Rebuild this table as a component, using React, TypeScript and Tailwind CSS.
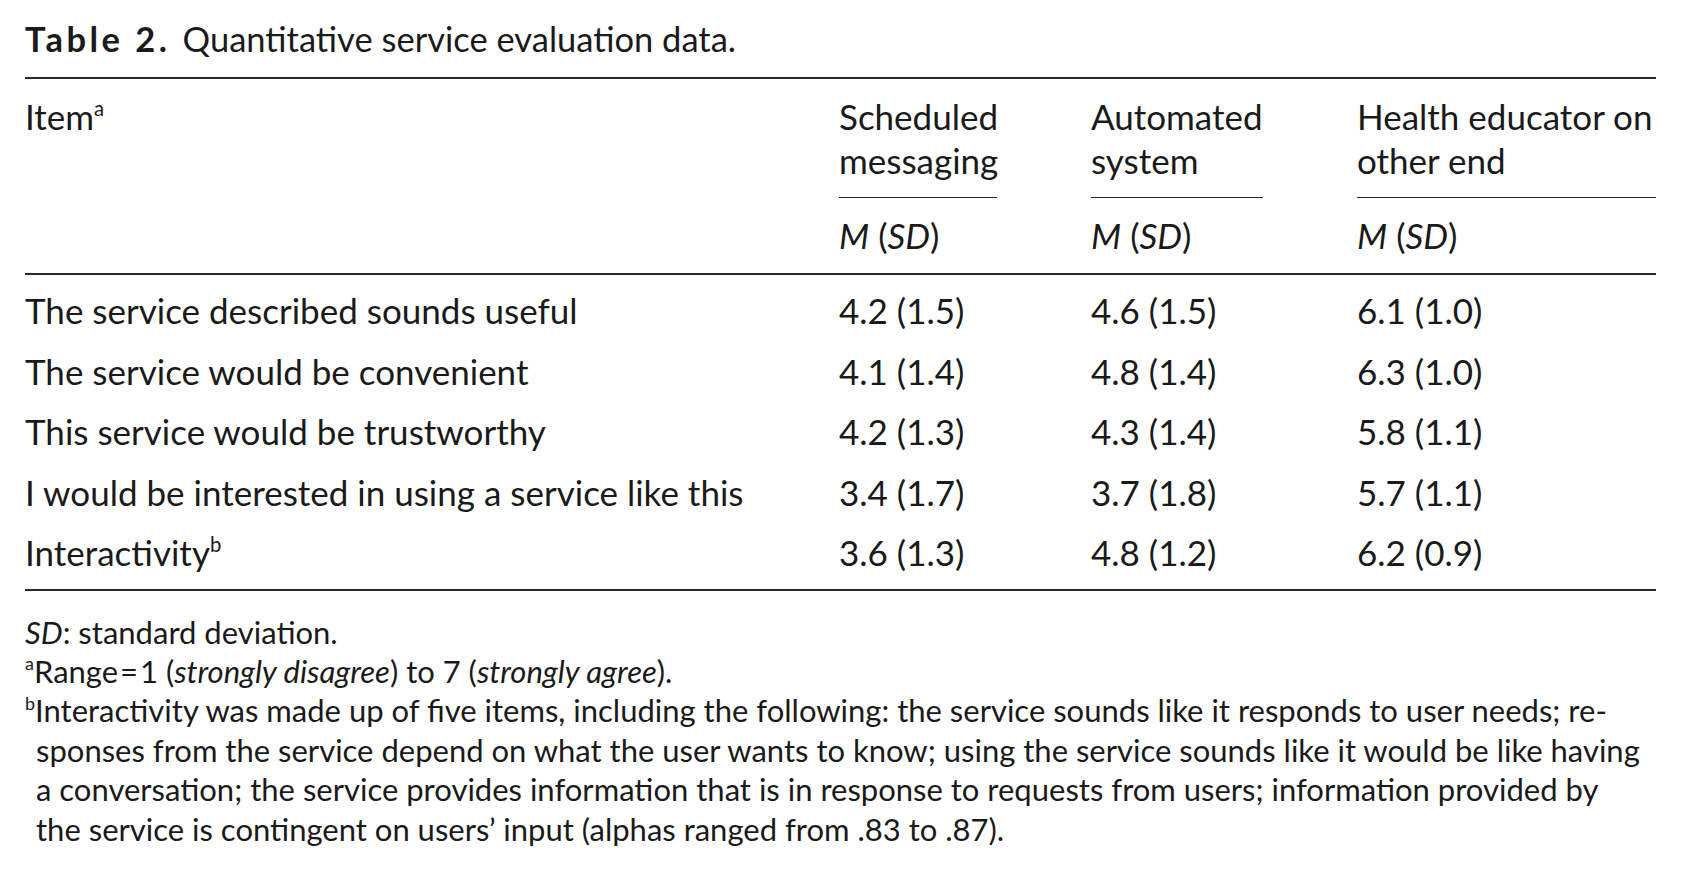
const rows = [
  { item: "The service described sounds useful", a: "4.2 (1.5)", b: "4.6 (1.5)", c: "6.1 (1.0)" },
  { item: "The service would be convenient", a: "4.1 (1.4)", b: "4.8 (1.4)", c: "6.3 (1.0)" },
  { item: "This service would be trustworthy", a: "4.2 (1.3)", b: "4.3 (1.4)", c: "5.8 (1.1)" },
  { item: "I would be interested in using a service like this", a: "3.4 (1.7)", b: "3.7 (1.8)", c: "5.7 (1.1)" },
];

function Sup({ children }: { children: React.ReactNode }) {
  return <sup className="text-[0.58em] top-[-0.7em]">{children}</sup>;
}

export default function App() {
  return (
    <div className="min-h-screen bg-white px-[25px] pt-[19px] font-['Lato','Open_Sans',sans-serif] text-[#1a1a1a]">
      <p className="text-[34.5px] leading-[40px] whitespace-nowrap">
        <span className="font-bold tracking-[3.5px] mr-[12px]">Table 2.</span>
        Quantitative service evaluation data.
      </p>

      <table className="mt-[18px] w-full table-fixed border-collapse text-[35px]">
        <colgroup>
          <col className="w-[814px]" />
          <col className="w-[252px]" />
          <col className="w-[266px]" />
          <col className="w-[299px]" />
        </colgroup>
        <thead>
          <tr className="border-t-2 border-[#262626] align-top">
            <th rowSpan={2} className="pt-[15px] text-left font-normal leading-[44px]">
              Item<Sup>a</Sup>
            </th>
            <th className="pt-[15px] text-left font-normal leading-[44px]">
              <div className="w-[158px] border-b-[1.5px] border-[#262626] pb-[15px] whitespace-nowrap">
                Scheduled
                <br />
                messaging
              </div>
            </th>
            <th className="pt-[15px] text-left font-normal leading-[44px]">
              <div className="w-[172px] border-b-[1.5px] border-[#262626] pb-[15px] whitespace-nowrap">
                Automated
                <br />
                system
              </div>
            </th>
            <th className="pt-[15px] text-left font-normal leading-[44px]">
              <div className="w-[299px] border-b-[1.5px] border-[#262626] pb-[15px] whitespace-nowrap">
                Health educator on
                <br />
                other end
              </div>
            </th>
          </tr>
          <tr className="border-b-2 border-[#262626]">
            {[0, 1, 2].map((i) => (
              <th key={i} className="pt-[15px] pb-[16px] text-left font-normal leading-[44px]">
                <i>M</i> (<i>SD</i>)
              </th>
            ))}
          </tr>
        </thead>
        <tbody className="leading-[60.5px]">
          {rows.map((r, i) => (
            <tr key={r.item} className={i === 0 ? "[&>td]:pt-[5px]" : ""}>
              <td className="whitespace-nowrap">{r.item}</td>
              <td>{r.a}</td>
              <td>{r.b}</td>
              <td>{r.c}</td>
            </tr>
          ))}
          <tr className="border-b-2 border-[#262626] [&>td]:pb-[6px]">
            <td>
              Interactivity<Sup>b</Sup>
            </td>
            <td>3.6 (1.3)</td>
            <td>4.8 (1.2)</td>
            <td>6.2 (0.9)</td>
          </tr>
        </tbody>
      </table>

      <div className="mt-[22px] text-[31px] leading-[39.4px] whitespace-nowrap">
        <p>
          <i>SD</i>: standard deviation.
        </p>
        <p>
          <Sup>a</Sup>Range{"\u200A"}={"\u200A"}1 (<i>strongly disagree</i>) to 7 (<i>strongly agree</i>).
        </p>
        <p className="pl-[11px] -indent-[11px]">
          <Sup>b</Sup>Interactivity was made up of five items, including the following: the service sounds like it responds to user needs; re-
          <br />
          sponses from the service depend on what the user wants to know; using the service sounds like it would be like having
          <br />
          a conversation; the service provides information that is in response to requests from users; information provided by
          <br />
          the service is contingent on users’ input (alphas ranged from .83 to .87).
        </p>
      </div>
    </div>
  );
}
